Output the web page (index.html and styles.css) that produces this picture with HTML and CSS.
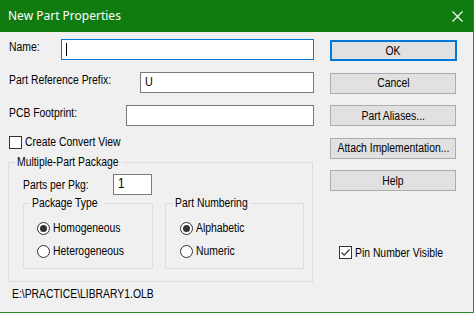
FILE: index.html
```html
<!DOCTYPE html>
<html lang="en">
<head>
    <meta charset="UTF-8">
    <link rel="stylesheet" href="styles.css">
    <title>New Part Properties</title>
</head>
<body>
    <div class="window">
        <div class="titlebar">
            <span class="title">New Part Properties</span>
            <svg class="close" width="11" height="11" viewBox="0 0 11 11">
                <path d="M0.5 0.5 L10.5 10.5 M10.5 0.5 L0.5 10.5" stroke="#fff" stroke-width="1.1" fill="none"/>
            </svg>
        </div>

        <div class="dialog-body">
            <div class="left-col">
                <div class="field-row">
                    <label><span class="txt">Name:</span></label>
                    <div class="textbox focused name-box"><span class="caret"></span></div>
                </div>
                <div class="field-row">
                    <label><span class="txt">Part Reference Prefix:</span></label>
                    <div class="textbox prefix-box"><span class="txt">U</span></div>
                </div>
                <div class="field-row">
                    <label><span class="txt">PCB Footprint:</span></label>
                    <div class="textbox pcb-box"></div>
                </div>

                <div class="check-row convert-row">
                    <span class="checkbox"></span>
                    <span class="txt">Create Convert View</span>
                </div>

                <fieldset class="group package-group">
                    <legend><span class="txt">Multiple-Part Package</span></legend>
                    <div class="pkg-row">
                        <label><span class="txt">Parts per Pkg:</span></label>
                        <div class="textbox pkg-box"><span class="txt">1</span></div>
                    </div>
                    <div class="sub-groups">
                        <fieldset class="group type-group">
                            <legend><span class="txt">Package Type</span></legend>
                            <div class="radio-row">
                                <span class="radio checked"></span>
                                <span class="txt">Homogeneous</span>
                            </div>
                            <div class="radio-row">
                                <span class="radio"></span>
                                <span class="txt">Heterogeneous</span>
                            </div>
                        </fieldset>
                        <fieldset class="group numbering-group">
                            <legend><span class="txt">Part Numbering</span></legend>
                            <div class="radio-row">
                                <span class="radio checked"></span>
                                <span class="txt">Alphabetic</span>
                            </div>
                            <div class="radio-row">
                                <span class="radio"></span>
                                <span class="txt">Numeric</span>
                            </div>
                        </fieldset>
                    </div>
                </fieldset>

                <div class="path"><span class="txt">E:\PRACTICE\LIBRARY1.OLB</span></div>
            </div>

            <div class="right-col">
                <button class="button default"><span class="txt">OK</span></button>
                <button class="button"><span class="txt">Cancel</span></button>
                <button class="button"><span class="txt">Part Aliases...</span></button>
                <button class="button"><span class="txt">Attach Implementation...</span></button>
                <button class="button"><span class="txt">Help</span></button>

                <div class="check-row pin-row">
                    <span class="checkbox">
                        <svg width="11" height="11" viewBox="0 0 11 11">
                            <path d="M1.5 5.5 L4.2 8.2 L9.5 2.5" stroke="#333" stroke-width="1.2" fill="none"/>
                        </svg>
                    </span>
                    <span class="txt">Pin Number Visible</span>
                </div>
            </div>
        </div>
    </div>
</body>
</html>
```

FILE: styles.css
```css
* {
    margin: 0;
    padding: 0;
    box-sizing: border-box;
}

body {
    font-family: 'Liberation Sans', Arial, sans-serif;
    font-size: 12.5px;
    line-height: 14px;
    color: #000;
    background-color: #f0f0f0;
}

/* the dialog font is a narrow sans, Liberation Sans squeezed to match */
.txt {
    display: inline-block;
    white-space: nowrap;
    transform: scaleX(0.83);
    transform-origin: 0 50%;
}

.window {
    width: 474px;
    height: 313px;
    display: flex;
    flex-direction: column;
    background-color: #f0f0f0;
    border-right: 1px solid #2f8a2f;
    border-bottom: 1px solid #2f8a2f;
}

/* Title bar */
.titlebar {
    height: 32px;
    flex-shrink: 0;
    background-color: #107c10;
    display: flex;
    align-items: center;
    justify-content: space-between;
    padding: 0 10px 0 8px;
}

.title {
    font-family: 'Noto Sans', sans-serif;
    font-size: 12px;
    color: #fff;
    padding-bottom: 1px;
}

.close {
    display: block;
}

.dialog-body {
    flex: 1;
    display: flex;
}

/* Left column */
.left-col {
    width: 314px;
    padding-left: 8px;
    padding-top: 7px;
}

.field-row {
    display: flex;
    align-items: flex-start;
    margin-bottom: 12px;
}

.field-row label {
    margin-left: 1px;
    padding-top: 1px;
    flex: 1;
}

.textbox {
    height: 21px;
    background-color: #fff;
    border: 1px solid #7a7a7a;
    padding: 2px 4px;
    font-size: 13px;
}

.textbox.focused {
    border-color: #0078d7;
}

.name-box { width: 253px; }
.prefix-box { width: 174px; }
.pcb-box { width: 188px; }

.caret {
    display: block;
    width: 1px;
    height: 13px;
    margin-top: 1px;
    background-color: #000;
}

.check-row {
    display: flex;
    align-items: center;
    gap: 3px;
    white-space: nowrap;
}

.convert-row {
    margin-top: -3px;
    margin-left: 1px;
}

.checkbox {
    width: 13px;
    height: 13px;
    flex-shrink: 0;
    border: 1px solid #333;
    background-color: #fff;
    display: flex;
    align-items: center;
    justify-content: center;
}

.checkbox svg {
    display: block;
}

/* Group boxes */
.group {
    border: 1px solid #dcdcdc;
    margin: 0;
    min-width: 0;
}

.group legend {
    padding: 0 2px;
    line-height: 14px;
    white-space: nowrap;
}

.package-group {
    width: 305px;
    height: 127px;
    margin-top: 6px;
    padding: 0 0 0 14px;
}

.package-group > legend {
    margin-left: -8px;
    width: 107px;
}

.pkg-row {
    display: flex;
    align-items: flex-start;
    margin-top: 5px;
}

.pkg-row label {
    width: 90px;
    padding-top: 4px;
}

.pkg-box {
    width: 39px;
    padding: 1px 4px;
    font-size: 14px;
}

.sub-groups {
    display: flex;
    gap: 12px;
    margin-top: 1px;
}

.sub-groups .group {
    height: 73px;
    flex-shrink: 0;
    padding: 11px 0 0 13px;
}

.sub-groups legend {
    margin-left: -7px;
}

.type-group { width: 130px; }
.type-group legend { width: 74px; }

.numbering-group {
    width: 139px;
    padding-left: 14px !important;
}
.numbering-group legend { width: 77px; }

.radio-row {
    display: flex;
    align-items: center;
    gap: 3px;
    margin-bottom: 9px;
}

.radio {
    width: 13px;
    height: 13px;
    flex-shrink: 0;
    border: 1px solid #333;
    border-radius: 50%;
    background-color: #fff;
    display: flex;
    align-items: center;
    justify-content: center;
}

.radio.checked::after {
    content: "";
    width: 7px;
    height: 7px;
    border-radius: 50%;
    background-color: #333;
}

.path {
    margin-top: 5px;
    margin-left: 4px;
}

/* Right column */
.right-col {
    width: 127px;
    margin-left: 16px;
    padding-top: 8px;
    display: flex;
    flex-direction: column;
    gap: 11.5px;
}

.button {
    height: 21px;
    width: 126px;
    padding: 0;
    display: flex;
    align-items: center;
    justify-content: center;
    font-family: inherit;
    font-size: 12.5px;
    color: #000;
    background-color: #e1e1e1;
    border: 1px solid #adadad;
    border-radius: 0;
}

.button .txt {
    transform-origin: 50% 50%;
}

.button.default {
    width: 127px;
    border: 2px solid #0078d7;
}

.pin-row {
    margin-top: 43px;
    margin-left: 9px;
}
```
